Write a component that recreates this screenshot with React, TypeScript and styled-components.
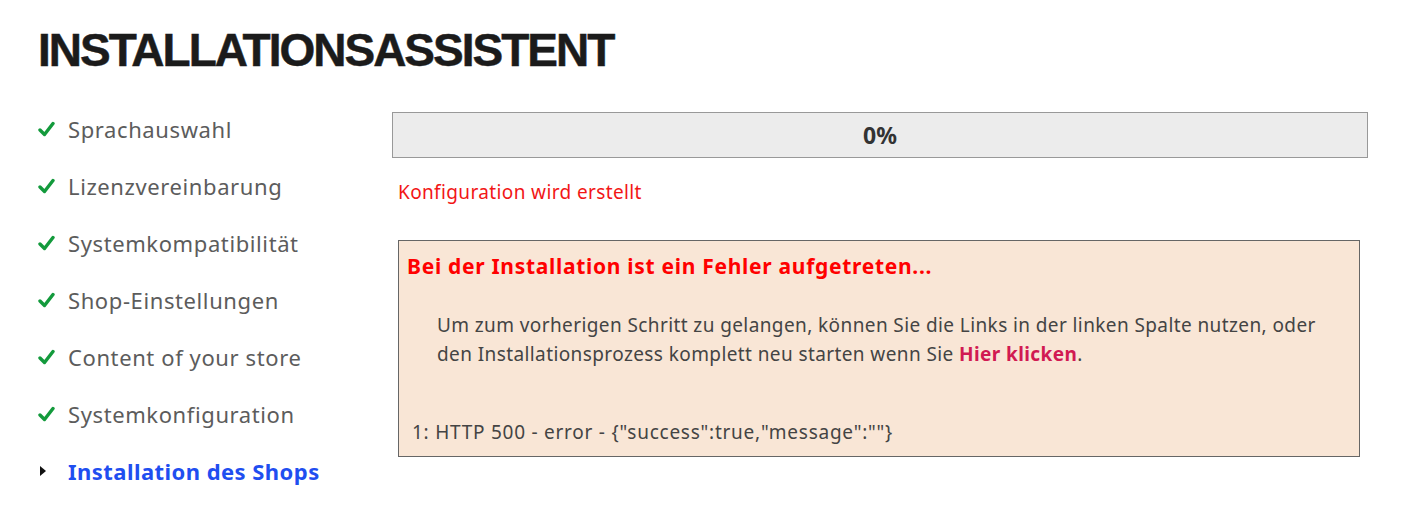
import React from "react";
import styled, { createGlobalStyle } from "styled-components";

const Global = createGlobalStyle`
  html, body { margin: 0; padding: 0; background: #fff; }
  body { font-family: "Noto Sans", "Open Sans", sans-serif; }
`;

const Page = styled.div`
  padding: 27px 0 0 38px;
`;

const Title = styled.h1`
  margin: 0;
  font-family: "Liberation Sans", Arial, sans-serif;
  font-weight: 900;
  font-size: 46px;
  line-height: 46px;
  letter-spacing: -2px;
  color: #1b1b1b;
  -webkit-text-stroke: 0.5px #1b1b1b;
`;

const Main = styled.div`
  display: grid;
  grid-template-columns: 354px 976px;
  margin-top: 27px;
`;

const StepList = styled.ul`
  list-style: none;
  margin: 0;
  padding: 0;
`;

const Step = styled.li<{ $active?: boolean }>`
  display: flex;
  align-items: center;
  height: 57px;
  font-size: 22px;
  letter-spacing: ${(p) => (p.$active ? "0.45px" : "0.6px")};
  font-weight: ${(p) => (p.$active ? 700 : 400)};
  color: ${(p) => (p.$active ? "#1f4ef0" : "#5c5c5c")};
`;

const Marker = styled.span`
  width: 30px;
  display: flex;
  align-items: center;
`;

const Content = styled.div`
  padding-top: 12px;
`;

const Progress = styled.div`
  height: 44px;
  border: 1px solid #999;
  background: #ececec;
  display: flex;
  align-items: center;
  justify-content: center;
  font-size: 23px;
  font-weight: 700;
  color: #333;
`;

const Status = styled.div`
  margin: 20px 0 0 6px;
  font-size: 19px;
  letter-spacing: 0.37px;
  line-height: 28px;
  color: #f21616;
`;

const ErrorBox = styled.div`
  margin: 34px 8px 0 6px;
  border: 1px solid #666;
  background: #f9e6d6;
  padding: 11px 8px 9px 8px;
  color: #444;
`;

const ErrorTitle = styled.div`
  font-size: 21px;
  letter-spacing: 0.7px;
  font-weight: 700;
  line-height: 28px;
  color: #ff0000;
`;

const ErrorText = styled.p`
  margin: 31px 0 0 30px;
  font-size: 19px;
  letter-spacing: 0.4px;
  line-height: 29px;
  color: #444;
`;

const Link = styled.a`
  color: #d11a52;
  font-weight: 700;
  text-decoration: none;
`;

const ErrorLine = styled.div`
  margin: 49px 0 0 5px;
  font-size: 19px;
  letter-spacing: 0.75px;
  line-height: 29px;
  color: #444;
`;

const Check = () => (
  <svg width="17" height="16" viewBox="0 0 17 16">
    <path d="M2 9 L6.5 13.5 L15 2.5" fill="none" stroke="#139a3c" strokeWidth="3.4" strokeLinecap="round" strokeLinejoin="round" />
  </svg>
);

const Arrow = () => (
  <svg width="10" height="12" viewBox="0 0 10 12">
    <path d="M2 1 L8 6 L2 11 Z" fill="#111" />
  </svg>
);

const steps = [
  "Sprachauswahl",
  "Lizenzvereinbarung",
  "Systemkompatibilität",
  "Shop-Einstellungen",
  "Content of your store",
  "Systemkonfiguration",
];

export default function App() {
  return (
    <>
      <Global />
      <Page>
        <Title>INSTALLATIONSASSISTENT</Title>
        <Main>
          <StepList>
            {steps.map((s) => (
              <Step key={s}>
                <Marker><Check /></Marker>
                {s}
              </Step>
            ))}
            <Step $active>
              <Marker><Arrow /></Marker>
              Installation des Shops
            </Step>
          </StepList>
          <Content>
            <Progress>0%</Progress>
            <Status>Konfiguration wird erstellt</Status>
            <ErrorBox>
              <ErrorTitle>Bei der Installation ist ein Fehler aufgetreten...</ErrorTitle>
              <ErrorText>
                Um zum vorherigen Schritt zu gelangen, können Sie die Links in der linken Spalte nutzen, oder
                <br />
                den Installationsprozess komplett neu starten wenn Sie <Link href="#">Hier klicken</Link>.
              </ErrorText>
              <ErrorLine>1: HTTP 500 - error - {'{"success":true,"message":""}'}</ErrorLine>
            </ErrorBox>
          </Content>
        </Main>
      </Page>
    </>
  );
}
